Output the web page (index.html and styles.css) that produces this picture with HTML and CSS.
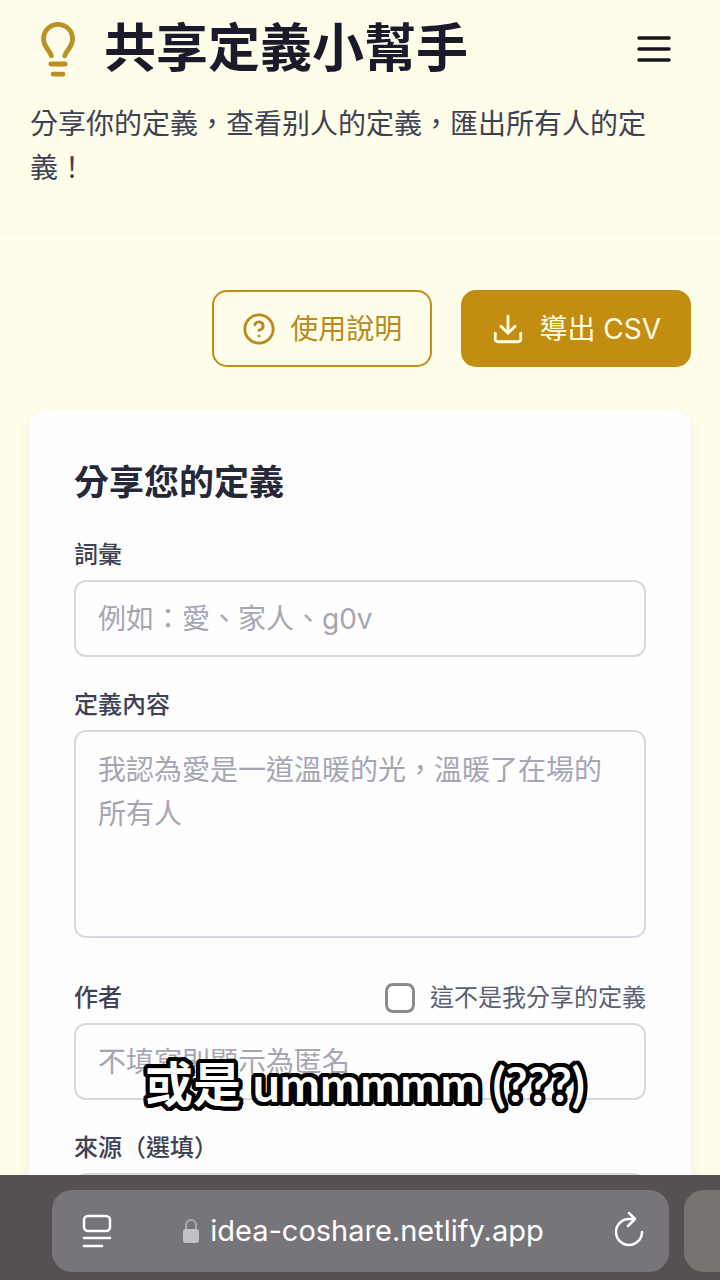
FILE: index.html
```html
<!DOCTYPE html>
<html lang="zh-Hant">
<head>
    <meta charset="UTF-8">
    <meta name="viewport" content="width=device-width, initial-scale=1.0">
    <title>共享定義小幫手</title>
    <link rel="stylesheet" href="styles.css">
</head>
<body>
    <div class="page">
        <header class="site-header">
            <div class="title-row">
                <svg class="logo" viewBox="0 0 60 60" fill="none" stroke="#bb9024" stroke-width="5" stroke-linecap="round" stroke-linejoin="round" aria-hidden="true">
                    <path d="M22 37C20.500 31 14 28.500 14 19.500a15 15 0 0 1 30 0C44 28.500 37.500 31 36 37"/>
                    <path d="M21.500 45.500h15M24 56h10"/>
                </svg>
                <h1>共享定義小幫手</h1>
                <button class="menu-btn" type="button" aria-label="選單">
                    <svg viewBox="0 0 44 44" fill="none" stroke="#16161c" stroke-width="3.500" stroke-linecap="round" aria-hidden="true">
                        <path d="M7 11h30M7 22h30M7 33h30"/>
                    </svg>
                </button>
            </div>
            <p class="tagline">分享你的定義，查看别人的定義，匯出所有人的定義！</p>
        </header>

        <main>
            <div class="actions">
                <button class="btn btn-outline" type="button">
                    <svg viewBox="0 0 24 24" fill="none" stroke="currentColor" stroke-width="2" stroke-linecap="round" stroke-linejoin="round" aria-hidden="true">
                        <circle cx="12" cy="12" r="10"/>
                        <path d="M9.090 9a3 3 0 0 1 5.830 1c0 2-3 3-3 3M12 17h.01"/>
                    </svg>
                    使用說明
                </button>
                <button class="btn btn-solid" type="button">
                    <svg viewBox="0 0 24 24" fill="none" stroke="currentColor" stroke-width="2" stroke-linecap="round" stroke-linejoin="round" aria-hidden="true">
                        <path d="M21 15v4a2 2 0 0 1-2 2H5a2 2 0 0 1-2-2v-4M7 10l5 5 5-5M12 15V3"/>
                    </svg>
                    導出 CSV
                </button>
            </div>

            <form class="card">
                <h2>分享您的定義</h2>
                <div class="field">
                    <label for="term">詞彙</label>
                    <input type="text" id="term" placeholder="例如：愛、家人、g0v">
                </div>
                <div class="field field-content">
                    <label for="content">定義內容</label>
                    <textarea id="content" placeholder="我認為愛是一道溫暖的光，溫暖了在場的所有人"></textarea>
                </div>
                <div class="field">
                    <div class="label-row">
                        <label for="author">作者</label>
                        <div class="check">
                            <input type="checkbox" id="not-mine">
                            <label for="not-mine">這不是我分享的定義</label>
                        </div>
                    </div>
                    <input type="text" id="author" placeholder="不填寫則顯示為匿名">
                </div>
                <div class="field">
                    <label for="source">來源（選填）</label>
                    <input type="text" id="source">
                </div>
            </form>
        </main>
    </div>

    <p class="caption">或是 ummmmm (???)</p>

    <nav class="browser-bar">
        <div class="address">
            <button class="bar-btn" type="button" aria-label="頁面選項">
                <svg viewBox="0 0 36 36" fill="none" stroke="currentColor" stroke-width="2.500" stroke-linecap="round" aria-hidden="true">
                    <rect x="5" y="3" width="26" height="15" rx="4"/>
                    <path d="M5 25h26M5 33h18"/>
                </svg>
            </button>
            <a class="url" href="#">
                <svg class="lock" viewBox="0 0 18 26" aria-hidden="true">
                    <path d="M4 12V7a5 5 0 0 1 10 0v5" fill="none" stroke="#aaa7ad" stroke-width="2"/>
                    <rect x="1" y="11" width="16" height="14" rx="3" fill="#c3bfc9"/>
                </svg>
                idea-coshare.netlify.app
            </a>
            <button class="bar-btn" type="button" aria-label="重新載入">
                <svg viewBox="0 0 36 36" fill="none" stroke="currentColor" stroke-width="2.500" stroke-linecap="round" stroke-linejoin="round" aria-hidden="true">
                    <path d="M31 19a13 13 0 1 1-13-13h6M18 0l6 6-7 7"/>
                </svg>
            </button>
        </div>
        <div class="next-tab"></div>
    </nav>
</body>
</html>
```

FILE: styles.css
```css
* {
    box-sizing: border-box;
}
body {
    font-family: Inter, "Noto Sans CJK TC", sans-serif;
    margin: 0;
    height: 100vh;
    display: flex;
    flex-direction: column;
    position: relative;
    overflow: hidden;
    background-color: #fffeeb;
    color: #3f4254;
    font-size: 28px;
    line-height: 44px;
}
button, input, textarea {
    font: inherit;
    margin: 0;
}
button {
    padding: 0;
    border: none;
    background: none;
    cursor: pointer;
}
svg {
    display: block;
    flex: none;
}
.page {
    flex: 1;
    min-height: 0;
    overflow: hidden;
}
.site-header {
    padding: 16px 30px 42px;
    border-bottom: 2px solid #fbf9e9;
}
.title-row {
    display: flex;
    align-items: center;
    height: 66px;
}
.logo {
    width: 58px;
    height: 58px;
}
h1 {
    flex: 1;
    margin: 0 0 0 16px;
    color: #1a1a2b;
    font-size: 52px;
    font-weight: 700;
    line-height: 66px;
}
.menu-btn {
    margin-right: 14px;
}
.menu-btn svg {
    width: 44px;
    height: 44px;
}
.tagline {
    margin: 20px 0 0;
}
main {
    padding: 56px 29px 0;
}
.actions {
    display: flex;
    justify-content: flex-end;
    gap: 29px;
    margin-bottom: 44px;
}
.btn {
    display: flex;
    align-items: center;
    gap: 14px;
    height: 77px;
    padding: 0 28px;
    border: 2px solid #c38d12;
    border-radius: 15px;
}
.btn svg {
    width: 34px;
    height: 34px;
}
.btn-outline {
    color: #b98a1c;
}
.btn-solid {
    background-color: #c38d12;
    color: #fffbe0;
}
.card {
    padding: 45px;
    border-radius: 15px;
    background-color: #fefefe;
    box-shadow: 0 6px 12px rgba(90, 80, 20, 0.1);
}
h2 {
    margin: 0 0 30px;
    color: #26283a;
    font-size: 35px;
    font-weight: 700;
    line-height: 52px;
}
.field {
    margin-bottom: 31px;
}
.field-content {
    margin-bottom: 43px;
}
label {
    display: block;
    font-size: 24px;
    line-height: 34px;
}
.field label {
    font-weight: 500;
}
.field .check label {
    color: #5a6072;
    font-weight: 400;
}
.label-row {
    display: flex;
    justify-content: space-between;
}
.check {
    display: flex;
    align-items: center;
    gap: 15px;
}
input[type="checkbox"] {
    appearance: none;
    width: 30px;
    height: 30px;
    border: 3px solid #8d8b91;
    border-radius: 8px;
    background-color: #fff;
}
input[type="text"], textarea {
    display: block;
    width: 100%;
    margin-top: 8px;
    padding: 0 22px;
    border: 2px solid #d8d8e0;
    border-radius: 12px;
    background-color: #fefefe;
    color: #3f4254;
}
input[type="text"] {
    height: 77px;
}
textarea {
    height: 208px;
    padding: 16px 22px;
    resize: none;
}
::placeholder {
    color: #a6a6b3;
    opacity: 1;
}
/* video subtitle over the page */
.caption {
    position: absolute;
    left: 0;
    right: 0;
    bottom: 164px;
    margin: 0;
    padding-left: 10px;
    color: #fff;
    font-family: Lato, "Noto Sans CJK TC", sans-serif;
    font-size: 48px;
    font-weight: 700;
    line-height: 64px;
    text-align: center;
    text-shadow:
        4px 0 #000, -4px 0 #000, 0 4px #000, 0 -4px #000,
        3px 3px #000, -3px 3px #000, 3px -3px #000, -3px -3px #000,
        4px 2px #000, -4px 2px #000, 4px -2px #000, -4px -2px #000,
        2px 4px #000, -2px 4px #000, 2px -4px #000, -2px -4px #000;
}
.browser-bar {
    display: flex;
    gap: 15px;
    padding: 15px 0 8px 52px;
    background-color: #555153;
}
.address {
    flex: 1;
    display: flex;
    align-items: center;
    justify-content: space-between;
    height: 82px;
    padding: 0 22px 0 27px;
    border-radius: 20px;
    background-color: #78757a;
    color: #fff;
}
.bar-btn {
    color: #fff;
}
.bar-btn svg {
    width: 36px;
    height: 36px;
    overflow: visible;
}
.url {
    display: flex;
    align-items: center;
    gap: 10px;
    color: #fff;
    font-size: 29px;
    text-decoration: none;
}
.lock {
    width: 18px;
    height: 26px;
}
.next-tab {
    width: 36px;
    border-radius: 20px 0 0 20px;
    background-color: #77736f;
}
```
